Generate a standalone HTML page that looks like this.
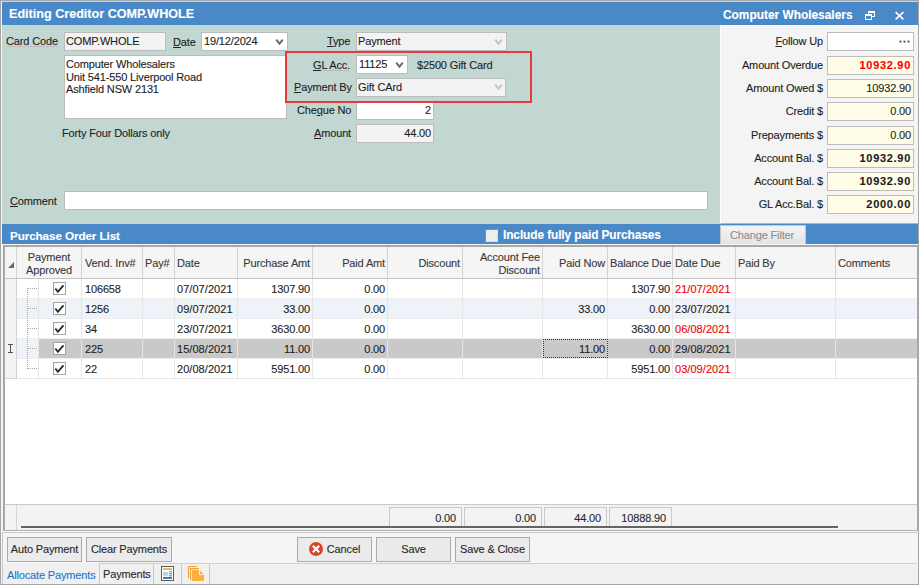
<!DOCTYPE html>
<html><head><meta charset="utf-8">
<style>
*{box-sizing:border-box;margin:0;padding:0}
html,body{width:919px;height:585px;overflow:hidden;background:#f0f0f0}
body{position:relative;font-family:"Liberation Sans",sans-serif;font-size:11px;letter-spacing:-0.15px;color:#1e1e1e;-webkit-text-stroke:0.12px currentColor}
.a{position:absolute;white-space:nowrap}
.blue{background:#4a89c8}
.inp{position:absolute;border:1px solid #bcbcbc;background:#fff;height:19px;line-height:17px;padding:0 3px;white-space:nowrap}
.gry{background:#f3f3f3}
.yel{background:#fffde8;text-align:right}
.lbl{position:absolute;white-space:nowrap;line-height:19px}
.r{text-align:right}
.chev{position:absolute;width:12px;height:8px}
u{text-decoration:underline;text-decoration-thickness:1px;text-underline-offset:0.6px;text-decoration-color:#222}
</style></head><body>
<!-- window border -->
<div class="a" style="left:0;top:0;width:919px;height:585px;border:1px solid #a6a6a6"></div>
<div class="a" style="left:1px;top:1px;width:917px;height:1px;background:#d5d2cb"></div>
<div class="a" style="left:1px;top:1px;width:1px;height:583px;background:#f6f6f6"></div>
<!-- title bar -->
<div class="a blue" style="left:2px;top:2px;width:916px;height:23px"></div>
<div class="a" style="left:9px;top:6px;font-size:12.6px;font-weight:bold;color:#fff;line-height:17px;letter-spacing:0">Editing Creditor COMP.WHOLE</div>
<div class="a" style="left:723px;top:7px;font-size:11.9px;font-weight:bold;color:#fff;line-height:17px;letter-spacing:0">Computer Wholesalers</div>
<!-- teal area -->
<div class="a" style="left:2px;top:25px;width:718px;height:199px;background:#c2d7d1"></div>
<!-- right panel -->
<div class="a" style="left:720px;top:25px;width:198px;height:199px;background:#f4f4f4;border-bottom:1px solid #b4b4b4;border-left:1px solid #fff;border-top:1px solid #fff"></div>

<!-- left form -->
<div class="lbl" style="left:6px;top:32px">Card Code</div>
<div class="a" style="left:7px;top:46px;width:51px;height:1px;background:#c4bcbc"></div>
<div class="inp gry" style="left:64px;top:32px;width:102px;padding-left:1px">COMP.WHOLE</div>
<div class="lbl" style="left:173px;top:33px"><u>D</u>ate</div>
<div class="inp" style="left:201px;top:32px;width:87px;padding-left:2px">19/12/2024</div>
<svg class="a" style="left:275px;top:38px" width="9" height="8" viewBox="0 0 9 8"><polyline points="1.2,1.6 4.5,5.6 7.8,1.6" fill="none" stroke="#6a6a6a" stroke-width="2"/></svg>
<div class="a" style="left:64px;top:55px;width:223px;height:64px;border:1px solid #bcbcbc;background:#fff;padding:2px 0 0 1px;line-height:12.6px">Computer Wholesalers<br>Unit 541-550 Liverpool Road<br>Ashfield NSW 2131</div>
<div class="lbl" style="left:62px;top:124px">Forty Four Dollars only</div>
<div class="lbl" style="left:10px;top:192px"><u>C</u>omment</div>
<div class="inp" style="left:64px;top:191px;width:644px"></div>

<div class="lbl" style="left:327px;top:32px"><u>T</u>ype</div>
<div class="inp gry" style="left:356px;top:32px;width:151px;padding-left:1px">Payment</div>
<svg class="a" style="left:494px;top:38px" width="9" height="8" viewBox="0 0 9 8"><polyline points="1.2,1.6 4.5,5.6 7.8,1.6" fill="none" stroke="#c4c4c4" stroke-width="2"/></svg>
<div class="lbl" style="left:313px;top:56px"><u>G</u>L Acc.</div>
<div class="a" style="left:321px;top:70px;width:28px;height:1px;background:#c0b8b8"></div>
<div class="inp" style="left:356px;top:55px;width:52px;padding-left:2px">11125</div>
<svg class="a" style="left:395px;top:61px" width="9" height="8" viewBox="0 0 9 8"><polyline points="1.2,1.6 4.5,5.6 7.8,1.6" fill="none" stroke="#6a6a6a" stroke-width="2"/></svg>
<div class="lbl" style="left:417px;top:56px">$2500 Gift Card</div>
<div class="lbl" style="left:294px;top:78px"><u>P</u>ayment By</div>
<div class="inp gry" style="left:356px;top:78px;width:150px;padding-left:1px">Gift CArd</div>
<svg class="a" style="left:494px;top:83px" width="9" height="8" viewBox="0 0 9 8"><polyline points="1.2,1.6 4.5,5.6 7.8,1.6" fill="none" stroke="#c4c4c4" stroke-width="2"/></svg>
<div class="lbl" style="left:297px;top:101px">Che<u>q</u>ue No</div>
<div class="inp r" style="left:356px;top:101px;width:78px;padding-right:2px">2</div>
<div class="lbl" style="left:314px;top:124px"><u>A</u>mount</div>
<div class="inp gry r" style="left:356px;top:124px;width:78px;padding-right:2px">44.00</div>
<div class="a" style="left:285px;top:51px;width:247px;height:52px;border:2px solid #e8393c"></div>

<!-- title icons -->
<svg class="a" style="left:864px;top:10px" width="12" height="11" viewBox="0 0 12 11" shape-rendering="crispEdges"><rect x="4" y="1" width="7" height="2" fill="#fff"/><rect x="4" y="1" width="1" height="3" fill="#fff"/><rect x="10" y="1" width="1" height="6" fill="#fff"/><rect x="8" y="6" width="3" height="1" fill="#fff"/><rect x="1" y="4" width="7" height="2" fill="#fff"/><rect x="1" y="4" width="1" height="6" fill="#fff"/><rect x="7" y="4" width="1" height="6" fill="#fff"/><rect x="1" y="9" width="7" height="1" fill="#fff"/></svg>
<svg class="a" style="left:894px;top:11px" width="11" height="9" viewBox="0 0 11 9"><path d="M1.6 1.2L9.4 8.4M9.4 1.2L1.6 8.4" stroke="#fff" stroke-width="1.6"/></svg>

<!-- right panel fields -->
<div class="lbl r" style="right:96px;top:32px"><u>F</u>ollow Up</div>
<div class="inp" style="left:827px;top:32px;width:87px;padding-right:2px"></div>
<div class="lbl r" style="right:96px;top:56px">Amount Overdue</div>
<div class="inp yel" style="left:827px;top:56px;width:87px;padding-right:2px"><b style="color:#f00;letter-spacing:0.7px">10932.90</b></div>
<div class="lbl r" style="right:96px;top:79px">Amount Owed $</div>
<div class="inp yel" style="left:827px;top:79px;width:87px;padding-right:2px">10932.90</div>
<div class="lbl r" style="right:96px;top:102px">Credit $</div>
<div class="inp yel" style="left:827px;top:102px;width:87px;padding-right:2px">0.00</div>
<div class="lbl r" style="right:96px;top:126px">Prepayments $</div>
<div class="inp yel" style="left:827px;top:126px;width:87px;padding-right:2px">0.00</div>
<div class="lbl r" style="right:96px;top:149px">Account Bal. $</div>
<div class="inp yel" style="left:827px;top:149px;width:87px;padding-right:2px"><b style="letter-spacing:0.7px">10932.90</b></div>
<div class="lbl r" style="right:96px;top:172px">Account Bal. $</div>
<div class="inp yel" style="left:827px;top:172px;width:87px;padding-right:2px"><b style="letter-spacing:0.7px">10932.90</b></div>
<div class="lbl r" style="right:96px;top:195px">GL Acc.Bal. $</div>
<div class="inp yel" style="left:827px;top:195px;width:87px;padding-right:2px"><b style="letter-spacing:0.7px">2000.00</b></div>
<svg class="a" style="left:899px;top:40px" width="12" height="3" viewBox="0 0 12 3"><rect x="0.5" y="0.6" width="2" height="2" fill="#5a5a5a"/><rect x="4.5" y="0.6" width="2" height="2" fill="#5a5a5a"/><rect x="8.5" y="0.6" width="2" height="2" fill="#5a5a5a"/></svg>

<!-- purchase order list bar -->
<div class="a blue" style="left:2px;top:224px;width:916px;height:20px"></div>
<div class="a" style="left:10px;top:227px;font-size:11.7px;font-weight:bold;color:#fff;line-height:17px;letter-spacing:-0.1px">Purchase Order List</div>
<div class="a" style="left:485px;top:229px;width:13px;height:13px;background:#eeeeee;border-top:1px solid #8c8c8c;border-left:1px solid #8c8c8c;border-right:1px solid #dcdcdc;border-bottom:1px solid #dcdcdc"></div>
<div class="a" style="left:503px;top:227px;font-size:11.9px;font-weight:bold;color:#fff;line-height:17px;letter-spacing:-0.1px">Include fully paid Purchases</div>
<div class="a" style="left:720px;top:225px;width:86px;height:19px;background:linear-gradient(#f4f4f4,#e4e4e4);border:1px solid #c6c6c6;border-bottom:none;color:#8e8e8e;line-height:18px;padding-left:9px">Change Filter</div>

<!-- grid -->
<div class="a" style="left:2px;top:244px;width:916px;height:1px;background:#f4f4f4"></div>
<div class="a" style="left:3px;top:245px;width:915px;height:286px;border-top:2px solid #a8a8a8;border-left:2px solid #a8a8a8;border-right:1px solid #a8a8a8;border-bottom:1px solid #b0b0b0;background:#fff"></div>
<div class="a" style="left:5px;top:247px;width:912px;height:32px;background:#f5f5f5;border-bottom:1px solid #c4c4c4"></div>
<div class="a" style="left:16px;top:247px;width:1px;height:31px;background:#d2d2d2"></div>
<div class="a" style="left:81px;top:247px;width:1px;height:31px;background:#d2d2d2"></div>
<div class="a" style="left:142px;top:247px;width:1px;height:31px;background:#d2d2d2"></div>
<div class="a" style="left:174px;top:247px;width:1px;height:31px;background:#d2d2d2"></div>
<div class="a" style="left:237px;top:247px;width:1px;height:31px;background:#d2d2d2"></div>
<div class="a" style="left:312px;top:247px;width:1px;height:31px;background:#d2d2d2"></div>
<div class="a" style="left:387px;top:247px;width:1px;height:31px;background:#d2d2d2"></div>
<div class="a" style="left:462px;top:247px;width:1px;height:31px;background:#d2d2d2"></div>
<div class="a" style="left:542px;top:247px;width:1px;height:31px;background:#d2d2d2"></div>
<div class="a" style="left:607px;top:247px;width:1px;height:31px;background:#d2d2d2"></div>
<div class="a" style="left:672px;top:247px;width:1px;height:31px;background:#d2d2d2"></div>
<div class="a" style="left:735px;top:247px;width:1px;height:31px;background:#d2d2d2"></div>
<div class="a" style="left:835px;top:247px;width:1px;height:31px;background:#d2d2d2"></div>
<div class="a" style="left:5px;top:279px;width:12px;height:100px;background:#f3f3f3;border-right:1px solid #d2d2d2;border-bottom:1px solid #d2d2d2"></div>
<svg class="a" style="left:7px;top:261px" width="8" height="8" viewBox="0 0 8 8"><polygon points="1,7 7,7 7,1" fill="#6a6a6a"/></svg>
<div class="a" style="left:17px;top:251px;width:64px;text-align:center;line-height:12.5px;color:#3a3a3a">Payment<br>Approved</div>
<div class="a" style="left:85px;top:254px;line-height:19px;color:#3a3a3a">Vend. Inv#</div>
<div class="a" style="left:145px;top:254px;line-height:19px;color:#3a3a3a">Pay#</div>
<div class="a" style="left:177px;top:254px;line-height:19px;color:#3a3a3a">Date</div>
<div class="a" style="right:609px;top:254px;line-height:19px;color:#3a3a3a;text-align:right">Purchase Amt</div>
<div class="a" style="right:534px;top:254px;line-height:19px;color:#3a3a3a;text-align:right">Paid Amt</div>
<div class="a" style="right:459px;top:254px;line-height:19px;color:#3a3a3a;text-align:right">Discount</div>
<div class="a" style="right:379px;top:251px;text-align:right;line-height:12.5px;color:#3a3a3a">Account Fee<br>Discount</div>
<div class="a" style="right:314px;top:254px;line-height:19px;color:#3a3a3a;text-align:right">Paid Now</div>
<div class="a" style="left:610px;top:254px;line-height:19px;color:#3a3a3a">Balance Due</div>
<div class="a" style="left:675px;top:254px;line-height:19px;color:#3a3a3a">Date Due</div>
<div class="a" style="left:738px;top:254px;line-height:19px;color:#3a3a3a">Paid By</div>
<div class="a" style="left:838px;top:254px;line-height:19px;color:#3a3a3a">Comments</div>
<div class="a" style="left:17px;top:279px;width:900px;height:19px;background:#ffffff"></div>
<div class="a" style="left:17px;top:298px;width:900px;height:1px;background:#efefef"></div>
<div class="a" style="left:85px;top:280px;line-height:19px;color:#1e1e1e">106658</div>
<div class="a" style="left:177px;top:280px;line-height:19px;color:#1e1e1e;letter-spacing:0.05px">07/07/2021</div>
<div class="a" style="right:609px;top:280px;line-height:19px;color:#1e1e1e">1307.90</div>
<div class="a" style="right:534px;top:280px;line-height:19px;color:#1e1e1e">0.00</div>
<div class="a" style="right:249px;top:280px;line-height:19px;color:#1e1e1e">1307.90</div>
<div class="a" style="left:675px;top:280px;line-height:19px;color:#f00000;letter-spacing:0.05px">21/07/2021</div>
<div class="a" style="left:53px;top:282px;width:13px;height:13px;border:1px solid #a2a2a2;background:#fff"></div>
<svg class="a" style="left:53px;top:282px" width="13" height="13" viewBox="0 0 13 13"><polyline points="2.3,6.5 4.9,9.8 10.5,3.4" fill="none" stroke="#303030" stroke-width="2"/></svg>
<div class="a" style="left:28px;top:288px;width:10px;height:1px;background:repeating-linear-gradient(90deg,#aaaaaa 0 1px,transparent 1px 2px)"></div>
<div class="a" style="left:17px;top:299px;width:900px;height:19px;background:#eef3f9"></div>
<div class="a" style="left:17px;top:318px;width:900px;height:1px;background:#efefef"></div>
<div class="a" style="left:85px;top:300px;line-height:19px;color:#1e1e1e">1256</div>
<div class="a" style="left:177px;top:300px;line-height:19px;color:#1e1e1e;letter-spacing:0.05px">09/07/2021</div>
<div class="a" style="right:609px;top:300px;line-height:19px;color:#1e1e1e">33.00</div>
<div class="a" style="right:534px;top:300px;line-height:19px;color:#1e1e1e">0.00</div>
<div class="a" style="right:314px;top:300px;line-height:19px;color:#1e1e1e">33.00</div>
<div class="a" style="right:249px;top:300px;line-height:19px;color:#1e1e1e">0.00</div>
<div class="a" style="left:675px;top:300px;line-height:19px;color:#1e1e1e;letter-spacing:0.05px">23/07/2021</div>
<div class="a" style="left:53px;top:302px;width:13px;height:13px;border:1px solid #a2a2a2;background:#fff"></div>
<svg class="a" style="left:53px;top:302px" width="13" height="13" viewBox="0 0 13 13"><polyline points="2.3,6.5 4.9,9.8 10.5,3.4" fill="none" stroke="#303030" stroke-width="2"/></svg>
<div class="a" style="left:28px;top:308px;width:10px;height:1px;background:repeating-linear-gradient(90deg,#aaaaaa 0 1px,transparent 1px 2px)"></div>
<div class="a" style="left:17px;top:319px;width:900px;height:19px;background:#ffffff"></div>
<div class="a" style="left:17px;top:338px;width:900px;height:1px;background:#efefef"></div>
<div class="a" style="left:85px;top:320px;line-height:19px;color:#1e1e1e">34</div>
<div class="a" style="left:177px;top:320px;line-height:19px;color:#1e1e1e;letter-spacing:0.05px">23/07/2021</div>
<div class="a" style="right:609px;top:320px;line-height:19px;color:#1e1e1e">3630.00</div>
<div class="a" style="right:534px;top:320px;line-height:19px;color:#1e1e1e">0.00</div>
<div class="a" style="right:249px;top:320px;line-height:19px;color:#1e1e1e">3630.00</div>
<div class="a" style="left:675px;top:320px;line-height:19px;color:#f00000;letter-spacing:0.05px">06/08/2021</div>
<div class="a" style="left:53px;top:322px;width:13px;height:13px;border:1px solid #a2a2a2;background:#fff"></div>
<svg class="a" style="left:53px;top:322px" width="13" height="13" viewBox="0 0 13 13"><polyline points="2.3,6.5 4.9,9.8 10.5,3.4" fill="none" stroke="#303030" stroke-width="2"/></svg>
<div class="a" style="left:28px;top:328px;width:10px;height:1px;background:repeating-linear-gradient(90deg,#aaaaaa 0 1px,transparent 1px 2px)"></div>
<div class="a" style="left:17px;top:339px;width:900px;height:19px;background:#eef3f9"></div>
<div class="a" style="left:39px;top:339px;width:878px;height:19px;background:#c9c9c9"></div>
<div class="a" style="left:17px;top:358px;width:900px;height:1px;background:#efefef"></div>
<div class="a" style="left:85px;top:340px;line-height:19px;color:#1e1e1e">225</div>
<div class="a" style="left:177px;top:340px;line-height:19px;color:#1e1e1e;letter-spacing:0.05px">15/08/2021</div>
<div class="a" style="right:609px;top:340px;line-height:19px;color:#1e1e1e">11.00</div>
<div class="a" style="right:534px;top:340px;line-height:19px;color:#1e1e1e">0.00</div>
<div class="a" style="right:314px;top:340px;line-height:19px;color:#1e1e1e">11.00</div>
<div class="a" style="right:249px;top:340px;line-height:19px;color:#1e1e1e">0.00</div>
<div class="a" style="left:675px;top:340px;line-height:19px;color:#1e1e1e;letter-spacing:0.05px">29/08/2021</div>
<div class="a" style="left:53px;top:342px;width:13px;height:13px;border:1px solid #a2a2a2;background:#fff"></div>
<svg class="a" style="left:53px;top:342px" width="13" height="13" viewBox="0 0 13 13"><polyline points="2.3,6.5 4.9,9.8 10.5,3.4" fill="none" stroke="#303030" stroke-width="2"/></svg>
<div class="a" style="left:28px;top:348px;width:10px;height:1px;background:repeating-linear-gradient(90deg,#aaaaaa 0 1px,transparent 1px 2px)"></div>
<div class="a" style="left:17px;top:359px;width:900px;height:19px;background:#ffffff"></div>
<div class="a" style="left:17px;top:378px;width:900px;height:1px;background:#efefef"></div>
<div class="a" style="left:85px;top:360px;line-height:19px;color:#1e1e1e">22</div>
<div class="a" style="left:177px;top:360px;line-height:19px;color:#1e1e1e;letter-spacing:0.05px">20/08/2021</div>
<div class="a" style="right:609px;top:360px;line-height:19px;color:#1e1e1e">5951.00</div>
<div class="a" style="right:534px;top:360px;line-height:19px;color:#1e1e1e">0.00</div>
<div class="a" style="right:249px;top:360px;line-height:19px;color:#1e1e1e">5951.00</div>
<div class="a" style="left:675px;top:360px;line-height:19px;color:#f00000;letter-spacing:0.05px">03/09/2021</div>
<div class="a" style="left:53px;top:362px;width:13px;height:13px;border:1px solid #a2a2a2;background:#fff"></div>
<svg class="a" style="left:53px;top:362px" width="13" height="13" viewBox="0 0 13 13"><polyline points="2.3,6.5 4.9,9.8 10.5,3.4" fill="none" stroke="#303030" stroke-width="2"/></svg>
<div class="a" style="left:28px;top:368px;width:10px;height:1px;background:repeating-linear-gradient(90deg,#aaaaaa 0 1px,transparent 1px 2px)"></div>
<div class="a" style="left:81px;top:279px;width:1px;height:100px;background:#e6e6e6"></div>
<div class="a" style="left:142px;top:279px;width:1px;height:100px;background:#e6e6e6"></div>
<div class="a" style="left:174px;top:279px;width:1px;height:100px;background:#e6e6e6"></div>
<div class="a" style="left:237px;top:279px;width:1px;height:100px;background:#e6e6e6"></div>
<div class="a" style="left:312px;top:279px;width:1px;height:100px;background:#e6e6e6"></div>
<div class="a" style="left:387px;top:279px;width:1px;height:100px;background:#e6e6e6"></div>
<div class="a" style="left:462px;top:279px;width:1px;height:100px;background:#e6e6e6"></div>
<div class="a" style="left:542px;top:279px;width:1px;height:100px;background:#e6e6e6"></div>
<div class="a" style="left:607px;top:279px;width:1px;height:100px;background:#e6e6e6"></div>
<div class="a" style="left:672px;top:279px;width:1px;height:100px;background:#e6e6e6"></div>
<div class="a" style="left:735px;top:279px;width:1px;height:100px;background:#e6e6e6"></div>
<div class="a" style="left:835px;top:279px;width:1px;height:100px;background:#e6e6e6"></div>
<div class="a" style="left:38px;top:279px;width:1px;height:100px;background:#e6e6e6"></div>
<div class="a" style="left:17px;top:378px;width:900px;height:1px;background:#e6e6e6"></div>
<div class="a" style="left:27px;top:288px;width:1px;height:81px;background:repeating-linear-gradient(180deg,#aaaaaa 0 1px,transparent 1px 2px)"></div>
<div class="a" style="left:543px;top:339px;width:65px;height:19px;border:1px dotted #333"></div>
<svg class="a" style="left:7px;top:343px" width="7" height="11" viewBox="0 0 7 11"><path d="M1 1.5H6M3.5 1.5V9.5M1 9.5H6" stroke="#505050" stroke-width="1" fill="none"/></svg>

<!-- grid footer -->
<div class="a" style="left:5px;top:504px;width:912px;height:26px;background:#f3f3f3;border-top:1px solid #c8c8c8"></div>
<div class="a" style="left:16px;top:505px;width:1px;height:25px;background:#d6d6d6"></div>
<div class="a" style="left:389px;top:507px;width:73px;height:20px;border:1px solid #cacaca;border-bottom:none;text-align:right;padding-right:5px;line-height:20px;color:#2a2a2a">0.00</div>
<div class="a" style="left:464px;top:507px;width:78px;height:20px;border:1px solid #cacaca;border-bottom:none;text-align:right;padding-right:5px;line-height:20px;color:#2a2a2a">0.00</div>
<div class="a" style="left:544px;top:507px;width:63px;height:20px;border:1px solid #cacaca;border-bottom:none;text-align:right;padding-right:5px;line-height:20px;color:#2a2a2a">44.00</div>
<div class="a" style="left:609px;top:507px;width:63px;height:20px;border:1px solid #cacaca;border-bottom:none;text-align:right;padding-right:5px;line-height:20px;color:#2a2a2a">10888.90</div>
<div class="a" style="left:21px;top:526px;width:817px;height:2px;background:#646464"></div>

<!-- bottom panel -->
<div class="a" style="left:2px;top:531px;width:915px;height:1px;background:#fbfbfb"></div>
<div class="a" style="left:2px;top:532px;width:915px;height:1px;background:#c8c8c8"></div>
<div class="a" style="left:2px;top:532px;width:1px;height:52px;background:#c8c8c8"></div>
<div class="a" style="left:3px;top:533px;width:914px;height:30px;background:#f5f5f5"></div>
<div class="a" style="left:99px;top:563px;width:818px;height:1px;background:#d0d0d0"></div>
<div class="a" style="left:99px;top:564px;width:818px;height:20px;background:#f0f0f0"></div>
<div class="a" style="left:7px;top:537px;width:75px;height:25px;background:#ebebeb;border:1px solid #ababab;text-align:center;line-height:23px;color:#2a2a2a">Auto Payment</div>
<div class="a" style="left:86px;top:537px;width:86px;height:25px;background:#ebebeb;border:1px solid #ababab;text-align:center;line-height:23px;color:#2a2a2a">Clear Payments</div>
<div class="a" style="left:297px;top:537px;width:75px;height:25px;background:#ebebeb;border:1px solid #ababab;text-align:center;line-height:23px;color:#2a2a2a"><span style="display:inline-block;width:18px"></span>Cancel</div>
<div class="a" style="left:376px;top:537px;width:75px;height:25px;background:#ebebeb;border:1px solid #ababab;text-align:center;line-height:23px;color:#2a2a2a">Save</div>
<div class="a" style="left:455px;top:537px;width:75px;height:25px;background:#ebebeb;border:1px solid #ababab;text-align:center;line-height:23px;color:#2a2a2a">Save &amp; Close</div>
<svg class="a" style="left:309px;top:542px" width="14" height="14" viewBox="0 0 14 14"><circle cx="7" cy="7" r="7" fill="#d8462a"/><path d="M3.8 3.8L10.2 10.2M10.2 3.8L3.8 10.2" stroke="#fff" stroke-width="2.1"/></svg>
<div class="a" style="left:7px;top:566px;line-height:19px;color:#1a78d4">Allocate Payments</div>
<div class="a" style="left:99px;top:564px;width:1px;height:20px;background:#c8c8c8"></div>
<div class="a" style="left:103px;top:565px;line-height:19px;color:#2a2a2a">Payments</div>
<div class="a" style="left:153px;top:564px;width:1px;height:20px;background:#c8c8c8"></div>
<div class="a" style="left:181px;top:564px;width:1px;height:20px;background:#c8c8c8"></div>
<div class="a" style="left:209px;top:564px;width:1px;height:20px;background:#c8c8c8"></div>
<svg class="a" style="left:161px;top:566px" width="14" height="16" viewBox="0 0 14 16"><rect x="0.5" y="0.5" width="12" height="14" fill="#fff" stroke="#5a5a5a" stroke-width="1"/><rect x="2" y="2.3" width="9" height="1.6" fill="#e8a33a"/><rect x="2" y="6" width="5" height="3.8" fill="#a8d4f0"/><rect x="8" y="5.4" width="3" height="0.9" fill="#666"/><rect x="8" y="7.4" width="3" height="0.9" fill="#666"/><rect x="8" y="9.4" width="3" height="0.9" fill="#666"/><rect x="2" y="11" width="9" height="1.8" fill="#2d6db5"/></svg>
<svg class="a" style="left:187px;top:565px" width="19" height="17" viewBox="0 0 19 17"><path d="M1.5 13V1.5H10" fill="none" stroke="#eaa53c" stroke-width="1.1"/><path d="M3.6 15V3.6H12" fill="none" stroke="#eaa53c" stroke-width="1.1"/><path d="M5 16V5H12.4L17 9.6V16Z" fill="#fbb041"/><path d="M12.4 5V9.6H17" fill="none" stroke="#fff" stroke-width="0.8"/></svg>
</body></html>
